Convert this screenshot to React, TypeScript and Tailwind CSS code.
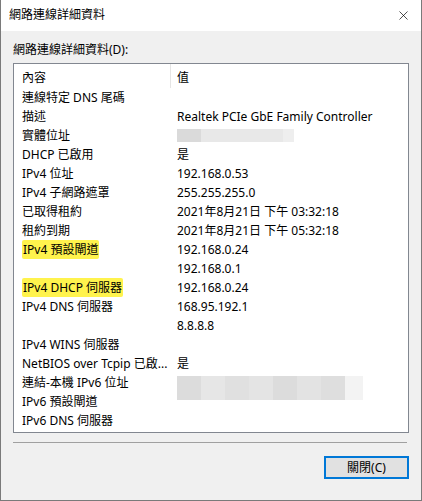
import { ReactNode } from 'react';
import { X } from 'lucide-react';

type Row = {
    label: string;
    value?: ReactNode;
    mark?: boolean;
};

const macBlur = (
    <div className="flex h-[13px] w-[117px]">
        <div className="w-[24px] bg-[#dadada]" />
        <div className="w-[82px] bg-[#e8e8e8]" />
        <div className="w-[11px] bg-[#eeeeee]" />
    </div>
);

const ipv6Shades = ['#dcdcdc', '#e6e6e6', '#e0e0e0', '#e4e4e4', '#dcdcdc', '#e3e3e3', '#dedede'];

const ipv6Blur = (
    <div className="mt-[11px] flex h-[24px] w-[186px]">
        {ipv6Shades.map((c, i) => (
            <div key={i} className="w-[24px]" style={{ backgroundColor: c }} />
        ))}
        <div className="w-[18px] bg-[#f3f3f3]" />
    </div>
);

const rows: Row[] = [
    { label: '連線特定 DNS 尾碼' },
    { label: '描述', value: 'Realtek PCIe GbE Family Controller' },
    { label: '實體位址', value: macBlur },
    { label: 'DHCP 已啟用', value: '是' },
    { label: 'IPv4 位址', value: '192.168.0.53' },
    { label: 'IPv4 子網路遮罩', value: '255.255.255.0' },
    { label: '已取得租約', value: '2021年8月21日 下午 03:32:18' },
    { label: '租約到期', value: '2021年8月21日 下午 05:32:18' },
    { label: 'IPv4 預設閘道', value: '192.168.0.24', mark: true },
    { label: '', value: '192.168.0.1' },
    { label: 'IPv4 DHCP 伺服器', value: '192.168.0.24', mark: true },
    { label: 'IPv4 DNS 伺服器', value: '168.95.192.1' },
    { label: '', value: '8.8.8.8' },
    { label: 'IPv4 WINS 伺服器' },
    { label: 'NetBIOS over Tcpip 已啟...', value: '是' },
    { label: '連結-本機 IPv6 位址', value: ipv6Blur },
    { label: 'IPv6 預設閘道' },
    { label: 'IPv6 DNS 伺服器' },
];

const font = "font-['Noto_Sans','Noto_Sans_CJK_TC',sans-serif]";

export default function App() {
    return (
        <div className={`${font} h-[501px] w-[422px] border-x border-b border-[#7a7a7a] bg-[#f0f0f0] text-[12px] leading-none text-black`}>
            <div className="flex h-[31px] items-center justify-between bg-white pl-[8px] pr-[10px]">
                <span className="pb-[1px]">網路連線詳細資料</span>
                <X size={15} strokeWidth={1.1} className="text-black" />
            </div>

            <div className="px-[12px]">
                <div className="flex h-[32px] items-center pt-[6px]">網路連線詳細資料(D):</div>

                <div className="h-[370px] w-[396px] overflow-hidden border border-[#828790] bg-white">
                    <div className="flex h-[24px] items-center">
                        <div className="flex h-full w-[157px] items-center border-r border-[#e5e5e5] pl-[8px] pt-[3px]">內容</div>
                        <div className="pl-[6px] pt-[3px]">值</div>
                    </div>
                    {rows.map((r, i) => (
                        <div key={i} className="flex h-[19px] items-center">
                            <div className="w-[163px] shrink-0 pl-[8px]">
                                {r.label && (
                                    <span className={r.mark ? 'rounded-[2px] bg-[#fff34d] px-[1px] py-[1px]' : ''}>{r.label}</span>
                                )}
                            </div>
                            <div className="flex h-full items-center whitespace-nowrap">{r.value}</div>
                        </div>
                    ))}
                </div>

                <div className="mt-[9px] h-px w-[394px] bg-[#a0a0a0]" />

                <div className="flex justify-end pt-[13px]">
                    <button className="flex h-[23px] w-[85px] items-center justify-center border-2 border-[#0078d7] bg-[#e1e1e1]">
                        關閉(C)
                    </button>
                </div>
            </div>
        </div>
    );
}
